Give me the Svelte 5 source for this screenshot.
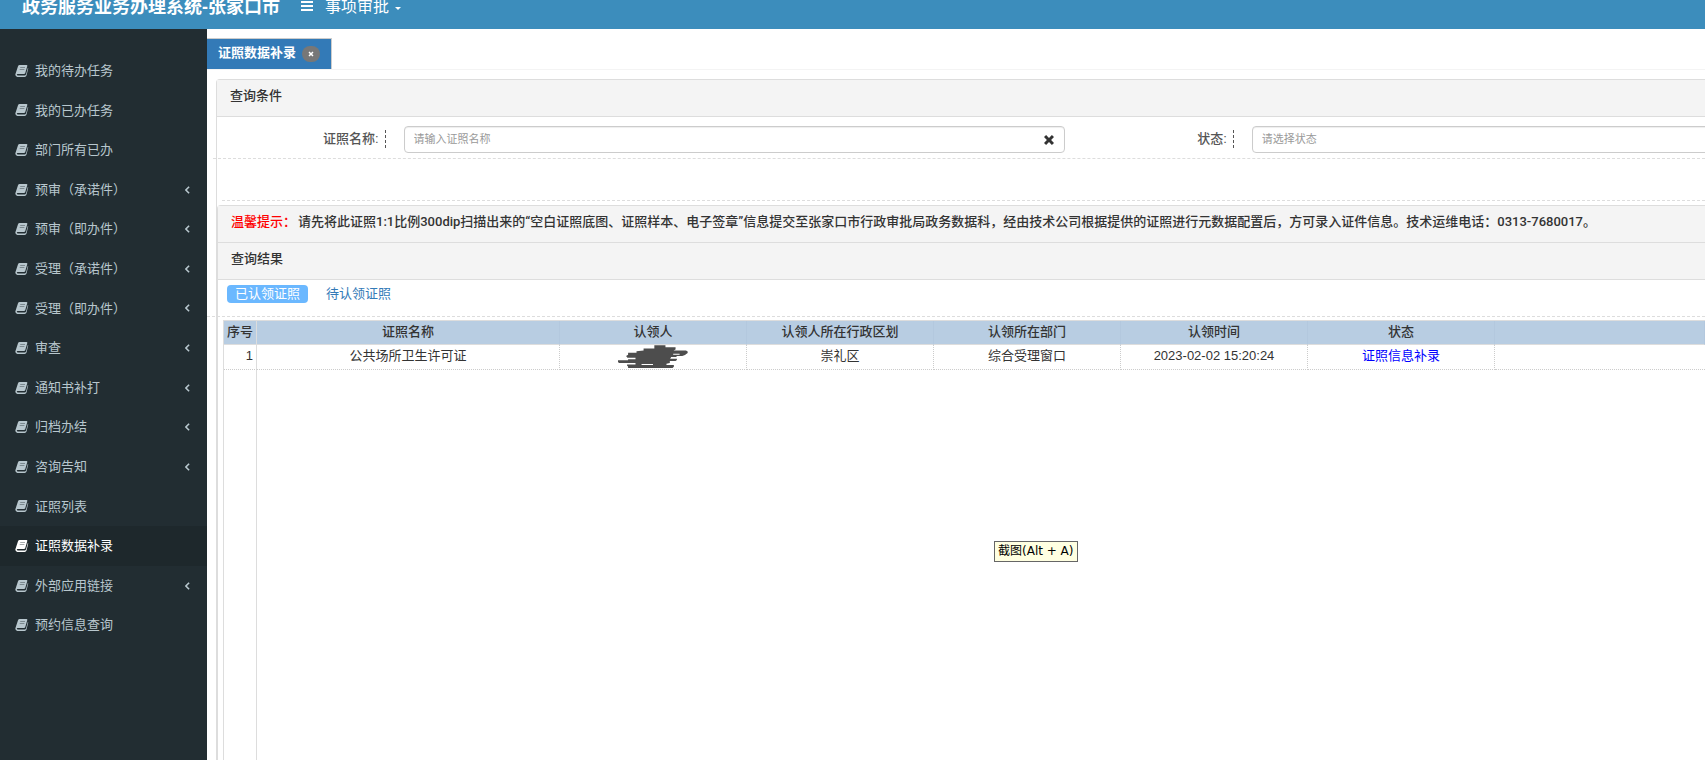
<script lang="ts">
	type MenuItem = { label: string; children?: boolean };

	const MENU: MenuItem[] = [
		{ label: '我的待办任务' },
		{ label: '我的已办任务' },
		{ label: '部门所有已办' },
		{ label: '预审（承诺件）', children: true },
		{ label: '预审（即办件）', children: true },
		{ label: '受理（承诺件）', children: true },
		{ label: '受理（即办件）', children: true },
		{ label: '审查', children: true },
		{ label: '通知书补打', children: true },
		{ label: '归档办结', children: true },
		{ label: '咨询告知', children: true },
		{ label: '证照列表' },
		{ label: '证照数据补录' },
		{ label: '外部应用链接', children: true },
		{ label: '预约信息查询' }
	];

	const TABS = ['已认领证照', '待认领证照'];

	const rows = [
		{ name: '公共场所卫生许可证', area: '崇礼区', dept: '综合受理窗口', time: '2023-02-02 15:20:24' }
	];

	let active = $state('证照数据补录');
	let tab = $state(TABS[0]);
	let certName = $state('');
	let status = $state('');
</script>

{#snippet times()}
	<svg class="times" viewBox="0 0 12 12" aria-hidden="true"><path d="M1 3.100 3.100 1 6 3.900 8.900 1 11 3.100 8.100 6 11 8.900 8.900 11 6 8.100 3.100 11 1 8.900 3.900 6z" /></svg>
{/snippet}

<div class="page">
	<header>
		<a class="brand" href="#home">政务服务业务办理系统-张家口市</a>
		<button class="toggle" aria-label="切换菜单">
			<svg viewBox="0 0 12 12" aria-hidden="true"><path d="M0 1h12v2H0zM0 5h12v2H0zM0 9h12v2H0z" /></svg>
		</button>
		<button class="module">事项审批<i class="caret"></i></button>
	</header>

	<div class="body">
		<nav>
			{#each MENU as m (m.label)}
				<a href="#menu" class:active={active === m.label} onclick={() => (active = m.label)}>
					<svg class="book" viewBox="0 0 14 14" aria-hidden="true">
						<path d="M4.500 1H11.500Q12.600 1 12.300 2L10.200 9.300Q9.900 10 9 10H2.500Q1.800 10 1.800 10.700 1.900 11.400 3 11.400H9.600Q10.600 11.400 11 10.400L12.900 3.800Q13.400 4.200 13.100 5L11.500 11.600Q11.100 13 9.600 13H2.300Q.300 12.600.300 10.600L3 2.200Q3.500 1 4.500 1Z" />
						<path class="lines" d="M5.200 3.500h4.800M4.700 5.500h4.700" />
					</svg>
					<span>{m.label}</span>
					{#if m.children}
						<svg class="angle" viewBox="0 0 6 10" aria-hidden="true"><path d="M5 1 1 5l4 4" /></svg>
					{/if}
				</a>
			{/each}
		</nav>

		<main>
			<div class="tabbar">
				<div class="page-tab">
					<strong>证照数据补录</strong>
					<button aria-label="关闭">{@render times()}</button>
				</div>
			</div>

			<section class="panel">
				<h2>查询条件</h2>
				<form onsubmit={(e) => e.preventDefault()}>
					<div class="field">
						<label for="cert">证照名称:</label>
						<div class="control">
							<input id="cert" bind:value={certName} placeholder="请输入证照名称" />
							<button type="button" class="clear" aria-label="清空" onclick={() => (certName = '')}>{@render times()}</button>
						</div>
					</div>
					<div class="field">
						<label for="status">状态:</label>
						<div class="control">
							<input id="status" bind:value={status} placeholder="请选择状态" />
						</div>
					</div>
				</form>
				<div class="buttons"></div>

				<div class="panel inner">
					<p class="notice">
						<em>温馨提示：</em>请先将此证照1:1比例300dip扫描出来的“空白证照底图、证照样本、电子签章”信息提交至张家口市行政审批局政务数据科，经由技术公司根据提供的证照进行元数据配置后，方可录入证件信息。技术运维电话：0313-7680017。
					</p>
					<h2>查询结果</h2>
					<div class="pills">
						{#each TABS as t}
							<button class:on={tab === t} onclick={() => (tab = t)}>{t}</button>
						{/each}
					</div>
					<div class="grid">
						<table>
							<colgroup>
								<col class="c-no" /><col class="c-name" /><col class="c" /><col class="c" /><col class="c" /><col class="c" /><col class="c" /><col />
							</colgroup>
							<thead>
								<tr>
									<th>序号</th><th>证照名称</th><th>认领人</th><th>认领人所在行政区划</th><th>认领所在部门</th><th>认领时间</th><th>状态</th><th></th>
								</tr>
							</thead>
							<tbody>
								{#each rows as r, i}
									<tr>
										<td class="no">{i + 1}</td>
										<td>{r.name}</td>
										<td>
											<svg class="scribble" viewBox="12 12 208 70" aria-hidden="true">
												<path d="M120 12h33v6h30v7l-6 3h37l5 3v4l-8 6-8 3h-17v3h-16l-3 5h20v4l-4 3h-17v6l-10 2v4h22v5l-4 4H42v-5l-3-2v-4h25v-4H15l-3-3v-5h30v-3h22v-5H40l-4-5 6-4v-6h25v-4l21-2v-6h32zM176 37v3h19v-3zM82 68v3h34v-3z" />
											</svg>
										</td>
										<td>{r.area}</td>
										<td>{r.dept}</td>
										<td>{r.time}</td>
										<td><a href="#edit">证照信息补录</a></td>
										<td></td>
									</tr>
								{/each}
							</tbody>
						</table>
						<div class="gutter"></div>
					</div>
				</div>
			</section>
		</main>
	</div>

	<div class="tooltip" role="tooltip">截图(Alt + A)</div>
</div>

<style>
	:global(body) {
		background: #fff;
	}
	.page {
		position: relative;
		display: flex;
		flex-direction: column;
		min-height: 100vh;
		overflow: hidden;
		font-family: 'Liberation Sans', 'Noto Sans CJK SC', sans-serif;
		font-size: 13px;
		line-height: 18px;
		color: #333;
	}
	button {
		border: 0;
		padding: 0;
		background: transparent;
		font: inherit;
		color: inherit;
		cursor: pointer;
	}
	a {
		text-decoration: none;
	}

	header {
		display: flex;
		align-items: flex-start;
		padding: 0 22px 15px;
		background: #3c8dbc;
		color: #fff;
		line-height: 14px;
	}
	.brand {
		font-size: 18px;
		font-weight: 700;
		color: #fff;
	}
	.toggle {
		margin-left: 21px;
	}
	.toggle svg {
		display: block;
		width: 12px;
		height: 12px;
		fill: #fff;
	}
	.module {
		display: flex;
		align-items: center;
		margin-left: 12px;
		font-size: 16px;
		line-height: 14px;
	}
	.caret {
		margin: 2px 0 0 6px;
		border: 3px solid transparent;
		border-top-color: #fff;
		border-bottom: 0;
	}

	.body {
		display: flex;
		flex: 1;
	}
	nav {
		flex: 0 0 207px;
		box-sizing: border-box;
		padding-top: 22px;
		background: #222d32;
	}
	nav a {
		display: flex;
		align-items: center;
		padding: 12px 17px 12px 15px;
		line-height: 1.2;
		color: #b8c7ce;
	}
	nav a.active {
		background: #1e282c;
		color: #fff;
	}
	nav span {
		flex: 1;
	}
	.book {
		width: 14px;
		height: 14px;
		margin-right: 6px;
		fill: currentColor;
	}
	.lines {
		fill: none;
		stroke: #222d32;
		stroke-opacity: 0.4;
	}
	.angle {
		width: 5px;
		height: 8px;
		fill: none;
		stroke: currentColor;
		stroke-width: 2;
	}

	main {
		display: flex;
		flex: 1;
		flex-direction: column;
		min-width: 0;
	}
	.tabbar {
		display: flex;
		padding-top: 9px;
		border-bottom: 1px solid #f4f4f4;
	}
	.page-tab {
		display: flex;
		box-sizing: border-box;
		align-items: center;
		gap: 6px;
		height: 31px;
		padding: 0 11px;
		border-top: 1px solid #ccc;
		border-right: 1px solid #ccc;
		background: #337ab7;
		color: #fff;
	}
	.page-tab strong {
		padding-bottom: 2px;
	}
	.page-tab button {
		display: flex;
		align-items: center;
		justify-content: center;
		width: 18px;
		height: 16px;
		border-radius: 8px;
		background: #777;
	}
	.times {
		display: block;
		width: 6px;
		height: 6px;
		fill: currentColor;
	}

	.panel {
		display: flex;
		flex: 1;
		flex-direction: column;
		margin: 9px 0 0 9px;
		border: 1px solid #ddd;
		border-width: 1px 0 0 1px;
		border-radius: 4px 0 0 0;
	}
	.panel.inner {
		margin: 4px 0 0;
	}
	h2,
	.notice {
		margin: 0;
		padding: 7px 13px 11px;
		border-bottom: 1px solid #ddd;
		background: #f4f4f4;
		font-family: Roboto, 'Noto Sans CJK SC', sans-serif;
		font-size: 13px;
		font-weight: 500;
	}
	.notice {
		white-space: nowrap;
	}
	.notice em {
		margin-right: 2px;
		font-style: normal;
		color: #f00;
	}
	form {
		display: flex;
		padding: 9px 0 5px;
		margin-left: -4px;
		padding-left: 4px;
		border-bottom: 1px dashed #ddd;
		overflow: hidden;
	}
	.field {
		display: flex;
		flex: 0 0 57%;
		align-items: center;
	}
	.field label {
		display: flex;
		flex: 0 0 22%;
		box-sizing: border-box;
		justify-content: flex-end;
		padding: 0 18px 2px 0;
		font-weight: 500;
		color: #555;
	}
	.field label::after {
		content: '';
		margin-left: 6px;
		border-right: 1px dashed #555;
	}
	.control {
		position: relative;
		flex: 1;
	}
	input {
		box-sizing: border-box;
		display: block;
		width: 100%;
		height: 27px;
		padding: 0 9px 1px;
		border: 1px solid #ccc;
		border-radius: 4px;
		box-shadow: inset 0 1px 1px #eee;
		font: inherit;
		font-size: 11px;
		color: #555;
	}
	input::placeholder {
		color: #999;
	}
	.clear {
		position: absolute;
		top: 8px;
		right: 10px;
		color: #333;
	}
	.clear .times {
		width: 12px;
		height: 12px;
	}
	.buttons {
		height: 41px;
		margin-left: 5px;
		border-bottom: 1px dashed #ddd;
	}

	.pills {
		display: flex;
		gap: 10px;
		margin-left: -11px;
		padding: 5px 0 13px 20px;
		border-bottom: 1px dashed #ddd;
	}
	.pills button {
		padding: 0 8px;
		border-radius: 4px;
		line-height: 18px;
		color: #337ab7;
	}
	.pills .on {
		background: #6bb8ff;
		color: #fff;
	}

	.grid {
		display: flex;
		flex: 1;
		flex-direction: column;
		margin: 3px 0 0 5px;
		border: 1px solid #ddd;
		border-width: 1px 0 0 1px;
	}
	table {
		width: 100%;
		table-layout: fixed;
		border-spacing: 0;
	}
	.c-no {
		width: 33px;
	}
	.c-name {
		width: 303px;
	}
	.c {
		width: 187px;
	}
	th,
	td {
		box-sizing: border-box;
		height: 24px;
		padding: 0 0 2px;
		text-align: center;
	}
	th {
		border-right: 1px solid #b3c8de;
		border-bottom: 1px solid #ddd;
		background: #b8cde2;
		font-weight: 500;
	}
	td {
		height: 25px;
		padding-bottom: 3px;
		border-right: 1px dotted #ccc;
		border-bottom: 1px dotted #ccc;
	}
	th:first-child,
	td:first-child {
		border-right: 1px solid #ddd;
	}
	td:last-child {
		border-right: 0;
	}
	td.no {
		padding-right: 3px;
		text-align: right;
	}
	td a {
		color: #00f;
	}
	.scribble {
		display: block;
		width: 70px;
		height: 24px;
		margin: -1px auto -3px;
		fill: #4d4d4d;
	}
	.gutter {
		flex: 1;
		box-sizing: border-box;
		width: 33px;
		border-right: 1px solid #ddd;
	}

	/* hint that floats over the page */
	.tooltip {
		position: absolute;
		top: 541px;
		left: 994px;
		padding: 0 3px 1px;
		border: 1px solid #666;
		background: #ffffe1;
		font-family: 'DejaVu Sans', 'Noto Sans CJK SC', sans-serif;
		font-size: 12px;
		color: #000;
	}
</style>
